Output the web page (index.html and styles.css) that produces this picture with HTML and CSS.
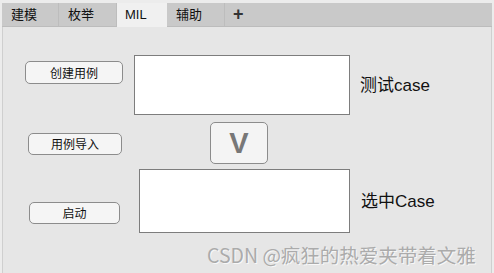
FILE: index.html
```html
<!DOCTYPE html>
<html lang="zh">
<head>
<meta charset="utf-8">
<title>MIL</title>
<link rel="stylesheet" href="styles.css">
</head>
<body>
<div class="window">
  <div class="tabbar">
    <div class="tab">建模</div>
    <div class="tab">枚举</div>
    <div class="tab active">MIL</div>
    <div class="tab">辅助</div>
    <div class="tab plus">+</div>
  </div>
  <div class="panel">
    <div class="row row1">
      <button class="btn btn-create">创建用例</button>
      <textarea class="box box1"></textarea>
      <span class="label">测试case</span>
    </div>
    <div class="row row2">
      <button class="btn btn-import">用例导入</button>
      <button class="vbtn">V</button>
    </div>
    <div class="row row3">
      <button class="btn btn-start">启动</button>
      <textarea class="box box2"></textarea>
      <span class="label">选中Case</span>
    </div>
  </div>
</div>
<div class="watermark">CSDN @疯狂的热爱夹带着文雅</div>
</body>
</html>
```

FILE: styles.css
```css
* { box-sizing: border-box; }
html, body {
  margin: 0;
  padding: 0;
  width: 494px;
  height: 273px;
  overflow: hidden;
  background: #ececec;
  font-family: "Liberation Sans", "Noto Sans CJK SC", sans-serif;
  color: #111;
}
.window {
  padding: 3px 2px 0 2px;
  height: 273px;
  display: flex;
  flex-direction: column;
}
.tabbar {
  display: flex;
  height: 24px;
  background: #c9c9c9;
  border-bottom: 1px solid #bcbcbc;
}
.tab {
  height: 23px;
  line-height: 23px;
  font-size: 13px;
  padding: 0 21px 0 9px;
  border-right: 1px solid #bdbdbd;
  color: #111;
}
.tab:nth-child(2) { padding-right: 22px; }
.tab.active {
  background: #f0f0f0;
  height: 24px;
  padding: 0 20px 0 8px;
  border-right: none;
  width: 50px;
}
.tab:nth-child(4) { padding-right: 22px; }
.tab.plus {
  font-size: 18px;
  font-weight: bold;
  padding: 0 8px;
  border-right: none;
  color: #333;
  width: 32px;
}
.panel {
  flex: 1;
  background: #e6e6e6;
  border-left: 1px solid #cfcfcf;
  border-right: 1px solid #cfcfcf;
  padding-top: 28px;
}
.row {
  display: flex;
  align-items: flex-start;
}
.row2 { margin-top: 7px; }
.row3 { margin-top: 5px; }
.btn {
  font-family: "Noto Sans CJK SC", sans-serif;
  font-size: 12px;
  line-height: 1;
  color: #111;
  background: #f5f5f5;
  border: 1px solid #8c8c8c;
  border-radius: 5px;
  padding: 0;
  height: 22px;
}
.btn-create { margin-left: 22px; margin-top: 6px; width: 98px; height: 23px; }
.btn-import { margin-left: 25px; margin-top: 11px; width: 94px; }
.btn-start { margin-left: 26px; margin-top: 33px; width: 91px; }
.box {
  display: block;
  resize: none;
  background: #fff;
  border: 1px solid #7d7d7d;
  padding: 0;
  margin: 0;
}
.box1 { margin-left: 11px; width: 216px; height: 60px; }
.box2 { margin-left: 19px; width: 211px; height: 64px; }
.label {
  align-self: center;
  font-size: 17px;
  margin-left: 10px;
  margin-top: -3px;
  color: #111;
}
.row3 .label { margin-left: 11px; }
.vbtn {
  margin-left: 88px;
  width: 58px;
  height: 42px;
  background: #f4f4f4;
  border: 1px solid #8c8c8c;
  border-radius: 5px;
  font-family: "Liberation Sans", sans-serif;
  font-weight: bold;
  font-size: 29px;
  color: #777;
  padding: 0;
  line-height: 1;
}
.watermark {
  position: absolute;
  left: 207px;
  top: 244px;
  font-family: "Noto Sans CJK SC", sans-serif;
  font-size: 19.5px;
  line-height: 21px;
  color: #ababab;
  text-shadow: 1px 1px 0 #f8f8f8;
  white-space: nowrap;
}
```
